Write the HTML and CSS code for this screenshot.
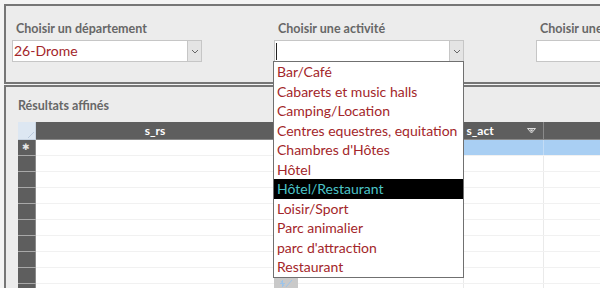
FILE: index.html
```html
<!DOCTYPE html>
<html lang="fr">
<head>
<meta charset="UTF-8" />
<title>Recherche affinée</title>
<link rel="stylesheet" href="styles.css">
</head>
<body>
  <div class="page">
    <!-- Filtres en cascade -->
    <div class="panel filters">
      <div class="field">
        <div class="field-label">Choisir un département</div>
        <div class="combo">
          <div class="combo-value">26-Drome</div>
          <div class="combo-button"><svg width="8" height="5" viewBox="0 0 8 5"><path d="M1 1 L4 4 L7 1" fill="none" stroke="#666" stroke-width="1"/></svg></div>
        </div>
      </div>

      <div class="field">
        <div class="field-label">Choisir une activité</div>
        <div class="combo">
          <div class="combo-value"><span class="caret"></span></div>
          <div class="combo-button"><svg width="8" height="5" viewBox="0 0 8 5"><path d="M1 1 L4 4 L7 1" fill="none" stroke="#666" stroke-width="1"/></svg></div>
        </div>
        <ul class="dropdown">
          <li>Bar/Café</li>
          <li>Cabarets et music halls</li>
          <li>Camping/Location</li>
          <li>Centres equestres, equitation</li>
          <li>Chambres d'Hôtes</li>
          <li>Hôtel</li>
          <li class="selected">Hôtel/Restaurant</li>
          <li>Loisir/Sport</li>
          <li>Parc animalier</li>
          <li>parc d'attraction</li>
          <li>Restaurant</li>
        </ul>
        <div class="nav-stub">
          <svg width="14" height="9" viewBox="0 0 14 9"><path d="M2 2 L5 7 M1 4.5 H6 M3.5 1 V8" stroke="#9cc4ea" stroke-width="1"/><path d="M7 8 L13 1" stroke="#9cc4ea" stroke-width="1"/></svg>
        </div>
      </div>

      <div class="field">
        <div class="field-label">Choisir une</div>
        <div class="combo">
          <div class="combo-value"></div>
          <div class="combo-button"><svg width="8" height="5" viewBox="0 0 8 5"><path d="M1 1 L4 4 L7 1" fill="none" stroke="#666" stroke-width="1"/></svg></div>
        </div>
      </div>
    </div>

    <!-- Sous-formulaire des résultats -->
    <div class="panel results">
      <div class="results-title">Résultats affinés</div>
      <table class="grid">
        <thead>
          <tr>
            <th class="corner"><svg width="8" height="8" viewBox="0 0 8 8"><path d="M1 7 L7 1" stroke="#b9c9dc" stroke-width="1"/></svg></th>
            <th class="col-rs">s_rs</th>
            <th class="col-hidden"></th>
            <th class="col-act">s_act<svg class="filter" width="9" height="6" viewBox="0 0 9 6"><path d="M0.5 0.5 H8.5 L4.5 5 Z" fill="none" stroke="#ddd" stroke-width="1"/><path d="M2.5 1.5 H6.5 L4.5 3.8 Z" fill="#ddd"/></svg></th>
            <th class="col-next"></th>
          </tr>
        </thead>
        <tbody>
          <tr class="new-row">
            <td class="sel">✱</td><td></td><td></td><td class="active"></td><td class="active"></td>
          </tr>
          <tr><td class="sel"></td><td></td><td></td><td></td><td></td></tr>
          <tr><td class="sel"></td><td></td><td></td><td></td><td></td></tr>
          <tr><td class="sel"></td><td></td><td></td><td></td><td></td></tr>
          <tr><td class="sel"></td><td></td><td></td><td></td><td></td></tr>
          <tr><td class="sel"></td><td></td><td></td><td></td><td></td></tr>
          <tr><td class="sel"></td><td></td><td></td><td></td><td></td></tr>
          <tr><td class="sel"></td><td></td><td></td><td></td><td></td></tr>
          <tr><td class="sel"></td><td></td><td></td><td></td><td></td></tr>
          <tr><td class="sel"></td><td></td><td></td><td></td><td></td></tr>
        </tbody>
      </table>
    </div>
  </div>
</body>
</html>
```

FILE: styles.css
```css
/* Base */
* {
  box-sizing: border-box;
}
html, body {
  margin: 0;
  padding: 0;
  width: 600px;
  height: 288px;
  overflow: hidden;
  background: #f4f4f4;
  font-family: Lato, "Open Sans", sans-serif;
}

.page {
  padding: 4px 0 0 4px;
  width: 640px;
}

/* Panels (form sections) */
.panel {
  background: #ececec;
  border: 2px solid #767676;
  border-right: none;
}
.filters {
  height: 80px;
  display: flex;
  padding: 16px 0 0 6px;
  gap: 72px;
}
.results {
  margin-top: 1px;
  height: 220px;
  padding: 12px 0 0 12px;
}

/* Filter fields */
.field {
  position: relative;
  width: 190px;
  flex-shrink: 0;
}
.field-label {
  font-size: 12.5px;
  font-weight: 700;
  color: #676767;
  line-height: 14px;
  padding-left: 4px;
  margin-bottom: 4px;
  white-space: nowrap;
}
.combo {
  display: flex;
  height: 22px;
  background: #fff;
  border: 1px solid #c6c6c6;
}
.combo-value {
  flex: 1;
  font-size: 14px;
  line-height: 20px;
  color: #a3262a;
  padding-left: 1px;
}
.caret {
  display: inline-block;
  width: 1px;
  height: 17px;
  margin-top: 2px;
  background: #222;
}
.combo-button {
  width: 14px;
  background: #e4e4e4;
  border-left: 1px solid #c6c6c6;
  display: flex;
  align-items: center;
  justify-content: center;
}

/* Open list of activities */
.dropdown {
  position: absolute;
  top: 39px;
  left: -1px;
  width: 191px;
  margin: 0;
  padding: 0;
  list-style: none;
  background: #fff;
  border: 1px solid #707070;
  z-index: 10;
}
.dropdown li {
  height: 19.5px;
  line-height: 19.5px;
  padding-left: 3px;
  font-size: 14px;
  color: #a3262a;
  white-space: nowrap;
}
.dropdown li.selected {
  background: #000;
  color: #4cc4c8;
}
.nav-stub {
  position: absolute;
  top: 255px;
  left: 0;
  width: 24px;
  height: 13px;
  background: #c9c9c9;
  display: flex;
  align-items: center;
  justify-content: center;
  z-index: 9;
}

/* Results datasheet */
.results-title {
  font-size: 12.5px;
  font-weight: 700;
  color: #676767;
  line-height: 14px;
  margin-bottom: 9px;
}
.grid {
  border-collapse: collapse;
  table-layout: fixed;
  width: 640px;
  background: #fff;
}
.grid th {
  height: 17px;
  padding: 0;
  background: #5e5e5e;
  color: #fff;
  font-size: 12px;
  font-weight: 700;
  border-right: 1px solid #8a8a8a;
  border-bottom: 1px solid #8a8a8a;
}
.grid th.corner {
  width: 17px;
  background: #dde7f2;
  border-color: #c8d4e2;
  text-align: right;
  vertical-align: bottom;
  line-height: 0;
}
.grid th.col-rs {
  width: 240px;
}
.grid th.col-hidden {
  width: 188px;
}
.grid th.col-act {
  width: 80px;
  text-align: left;
  padding-left: 3px;
  position: relative;
}
.filter {
  position: absolute;
  right: 7px;
  top: 6px;
}
.grid td {
  height: 16px;
  padding: 0;
  border-bottom: 1px solid #f1f1f1;
  border-right: 1px solid #eaeaea;
}
.grid td.sel {
  background: #5e5e5e;
  border-bottom: 1px solid #a8a8a8;
  border-right: 1px solid #8a8a8a;
  color: #e6e6e6;
  font-size: 9px;
  text-align: center;
  line-height: 14px;
}
.grid td.active {
  background: #a9cff3;
  border-right-color: #c3dcf5;
}
```
